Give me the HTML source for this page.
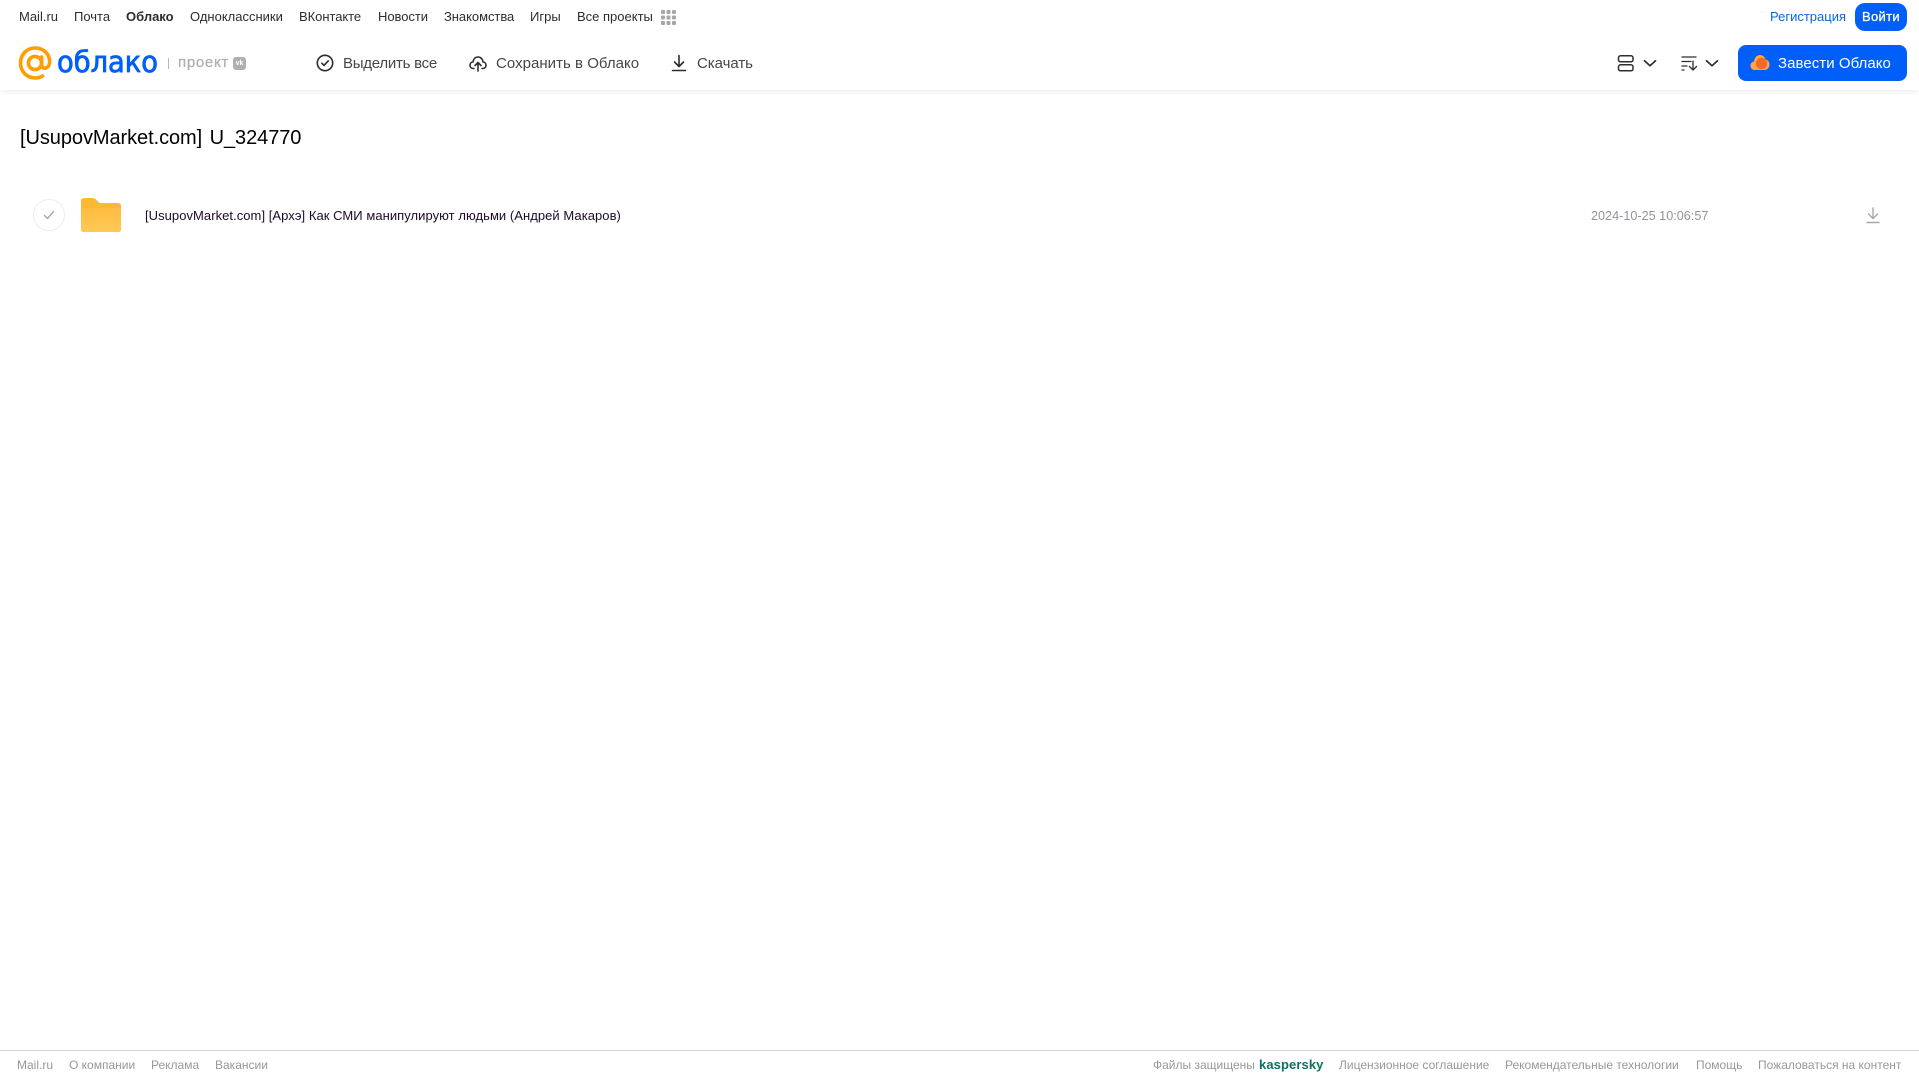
<!DOCTYPE html>
<html lang="ru">
<head>
<meta charset="utf-8">
<title>Облако</title>
<style>
html,body{margin:0;padding:0;background:#fff}
body{width:1919px;height:1079px;position:relative;overflow:hidden;font-family:"Liberation Sans","Noto Sans CJK SC",sans-serif}
.t{position:absolute;white-space:nowrap;line-height:18px;height:18px}
.n{top:8px;font-size:13px;color:#2c2d2e}
.b{top:55px;font-size:15px;color:#2c2d2e;opacity:.88}
.f{top:1056px;font-size:12px;color:#97989e}
svg{position:absolute;overflow:visible}
#hdr{position:absolute;left:0;top:0;width:1919px;height:90px;background:#fff;box-shadow:0 1px 6px rgba(0,0,0,.09)}
#ftr{position:absolute;left:0;top:1050px;width:1919px;height:1px;background:#d4d4d6}
</style>
</head>
<body>
<div id="hdr"></div>

<span class="t n" style="left:19px">Mail.ru</span>
<span class="t n" style="left:74px">Почта</span>
<span class="t n" style="left:126px;font-weight:bold">Облако</span>
<span class="t n" style="left:190px">Одноклассники</span>
<span class="t n" style="left:299px;letter-spacing:-.05px">ВКонтакте</span>
<span class="t n" style="left:378px;letter-spacing:-.05px">Новости</span>
<span class="t n" style="left:444px;letter-spacing:-.05px">Знакомства</span>
<span class="t n" style="left:530px">Игры</span>
<span class="t n" style="left:577px">Все проекты</span>
<svg style="left:661px;top:10px" width="15" height="15" fill="#a5a7ad">
<rect x="0" y="0" width="4" height="4" rx="1"/><rect x="5.5" y="0" width="4" height="4" rx="1"/><rect x="11" y="0" width="4" height="4" rx="1"/>
<rect x="0" y="5.5" width="4" height="4" rx="1"/><rect x="5.5" y="5.5" width="4" height="4" rx="1"/><rect x="11" y="5.5" width="4" height="4" rx="1"/>
<rect x="0" y="11" width="4" height="4" rx="1"/><rect x="5.5" y="11" width="4" height="4" rx="1"/><rect x="11" y="11" width="4" height="4" rx="1"/>
</svg>

<span class="t n" style="left:1770px;color:#0a66d8">Регистрация</span>
<div style="position:absolute;left:1855px;top:3px;width:52px;height:28px;border-radius:10px;background:#005ff9;color:#fff;font-size:13px;line-height:28px;text-align:center;letter-spacing:.3px;-webkit-text-stroke:.3px #fff">Войти</div>

<!-- logo -->
<svg style="left:19px;top:46px" width="36" height="34" viewBox="0 0 36 34" fill="none" stroke="#ff9e00" stroke-width="3.6" stroke-linecap="round">
<circle cx="16" cy="17" r="6.6"/>
<path d="M22.6 11v8c0 4.600 7.400 4.600 8-2.500C31 8 24.500 2 16 2 7.500 2 1.500 9 1.500 17c0 8.500 6.500 15 14.500 15 3 0 5.500-.7 7.500-2"/>
</svg>
<svg style="left:56px;top:44px" width="106" height="36">
<text x="1" y="28" font-family="'DejaVu Sans',sans-serif" font-size="29" fill="#005ff9" stroke="#005ff9" stroke-width=".8" textLength="101" lengthAdjust="spacingAndGlyphs">облако</text>
</svg>
<div style="position:absolute;left:168px;top:58px;width:1px;height:11px;background:#b8b8bb"></div>
<span class="t" style="left:178px;top:54px;font-size:15px;color:#aeb0b5;letter-spacing:.7px;-webkit-text-stroke:.3px #aeb0b5">проект</span>
<div style="position:absolute;left:233px;top:57px;width:13px;height:13px;border-radius:3px;background:#aeb0b5;color:#fff;font-size:7px;font-weight:bold;line-height:13px;text-align:center">vk</div>

<!-- toolbar -->
<svg style="left:316px;top:54px" width="18" height="18" fill="none" stroke="#2c2d2e" stroke-width="1.6" stroke-linecap="round" stroke-linejoin="round">
<circle cx="9" cy="9" r="7.7"/><path d="M5.800 9.200l2.200 2.200 4.300-4.600"/>
</svg>
<span class="t b" style="left:343px;letter-spacing:-.25px">Выделить все</span>

<svg style="left:469px;top:54px" width="18" height="18" fill="none" stroke="#2c2d2e" stroke-width="1.6" stroke-linecap="round" stroke-linejoin="round">
<path d="M5 14.500H4.500C2.300 14.500 1 13 1 11.200 1 9.400 2.300 8 4 8c.4-3 2.400-5 5-5 2.700 0 4.700 2 5 5 1.700 0 3 1.400 3 3.200 0 1.800-1.300 3.300-3.500 3.300H13"/>
<path d="M9 17V9M6 11.500L9 8.500l3 3"/>
</svg>
<span class="t b" style="left:496px;letter-spacing:.03px">Сохранить в Облако</span>

<svg style="left:671px;top:54px" width="16" height="18" fill="none" stroke="#2c2d2e" stroke-width="1.6" stroke-linecap="round" stroke-linejoin="round">
<path d="M8 1.500V12M3.500 8l4.500 4.500L12.500 8M1.500 16.500h13"/>
</svg>
<span class="t b" style="left:697px;letter-spacing:-.05px">Скачать</span>

<!-- right toolbar -->
<svg style="left:1617px;top:54px" width="18" height="18" fill="none" stroke="#2c2d2e" stroke-width="1.5">
<rect x="1.500" y="1.800" width="14.500" height="6" rx="2"/><rect x="1.500" y="10.800" width="14.500" height="6" rx="2"/>
</svg>
<svg style="left:1643px;top:59px" width="14" height="9" fill="none" stroke="#2c2d2e" stroke-width="1.700" stroke-linecap="round" stroke-linejoin="round"><path d="M1.500 1.800L7 6.800l5.500-5"/></svg>
<svg style="left:1681px;top:55px" width="18" height="16" fill="none" stroke="#2c2d2e" stroke-width="1.300" stroke-linecap="round" stroke-linejoin="round">
<path d="M1 2h14M1 6.500h9M1 11h5M1 15h2M12 6v9M8.500 11.500l3.500 3.500 3.500-3.500"/>
</svg>
<svg style="left:1705px;top:59px" width="14" height="9" fill="none" stroke="#2c2d2e" stroke-width="1.700" stroke-linecap="round" stroke-linejoin="round"><path d="M1.500 1.800L7 6.800l5.500-5"/></svg>

<div style="position:absolute;left:1738px;top:45px;width:169px;height:36px;border-radius:8px;background:#005ff9"></div>
<svg style="left:1750px;top:54px" width="20" height="17">
<path d="M5 16C2 16 .5 14 .5 11.500 .5 9.500 2 7.800 4 7.500 4.500 3.500 7 1 10 1c2.800 0 5 2 5.500 4.500C18 6 19.500 8 19.500 10.500 19.500 13.500 17.500 16 14.500 16z" fill="#ffa930"/>
<circle cx="11.500" cy="9.500" r="5.700" fill="#f4682a"/>
</svg>
<span class="t" style="left:1778px;top:55px;font-size:15px;color:#fff;letter-spacing:.05px">Завести Облако</span>

<!-- title -->
<span class="t" style="left:20px;top:124px;height:28px;line-height:28px;font-size:20px;color:#000;word-spacing:2px;letter-spacing:-.07px">[UsupovMarket.com] U_324770</span>

<!-- row -->
<div style="position:absolute;left:33px;top:199px;width:30px;height:30px;border:1px solid #ecedef;border-radius:50%"></div>
<svg style="left:43px;top:210px" width="12" height="10" fill="none" stroke="#a5a7ad" stroke-width="1.400" stroke-linecap="round" stroke-linejoin="round"><path d="M1.500 5.500l3 3 6-7"/></svg>
<svg style="left:81px;top:198px" width="40" height="34">
<defs><linearGradient id="g" x1="0" y1="0" x2="0" y2="1"><stop offset="0" stop-color="#ffbc41"/><stop offset="1" stop-color="#ffc956"/></linearGradient></defs>
<path d="M0 3Q0 0 3 0H11Q14 0 16 2.500T20 5H37Q40 5 40 8V31Q40 34 37 34H3Q0 34 0 31Z" fill="#ffb834"/>
<path d="M0 10H40V31Q40 34 37 34H3Q0 34 0 31Z" fill="url(#g)"/>
</svg>
<span class="t" style="left:145px;top:207px;font-size:13px;color:#1d0a2a;letter-spacing:.05px">[UsupovMarket.com] [Архэ] Как СМИ манипулируют людьми (Андрей Макаров)</span>
<span class="t" style="left:1591px;top:207px;font-size:12.65px;color:#919399">2024-10-25 10:06:57</span>
<svg style="left:1866px;top:207px" width="14" height="17" fill="none" stroke="#a5a7ad" stroke-width="1.400" stroke-linecap="round" stroke-linejoin="round">
<path d="M7 1v10.500M2.500 7L7 11.500 11.500 7M1 15.500h12"/>
</svg>

<!-- footer -->
<div id="ftr"></div>
<span class="t f" style="left:17px">Mail.ru</span>
<span class="t f" style="left:69px">О компании</span>
<span class="t f" style="left:151px">Реклама</span>
<span class="t f" style="left:215px">Вакансии</span>
<span class="t f" style="left:1153px">Файлы защищены</span>
<span class="t f" style="left:1259px;color:#0a7360;font-weight:bold;font-size:13px;letter-spacing:.1px">kaspersky</span>
<span class="t f" style="left:1339px">Лицензионное соглашение</span>
<span class="t f" style="left:1505px">Рекомендательные технологии</span>
<span class="t f" style="left:1696px">Помощь</span>
<span class="t f" style="left:1758px">Пожаловаться на контент</span>
</body>
</html>
